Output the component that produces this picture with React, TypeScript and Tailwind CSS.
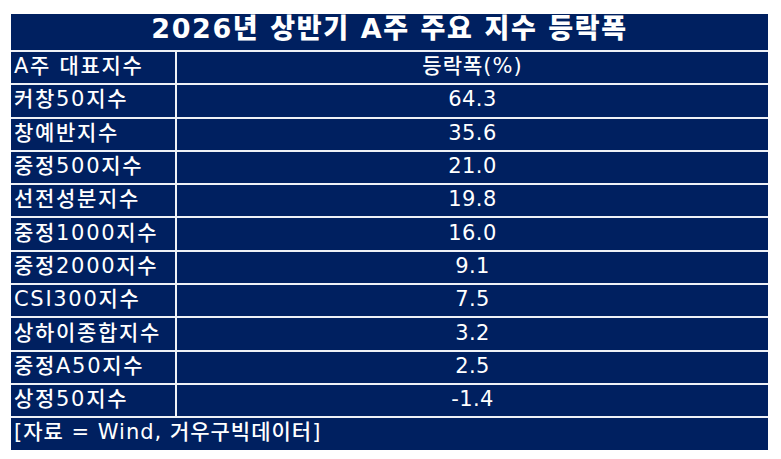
import React from "react";

const rows: [string, string][] = [
  ["커창50지수", "64.3"],
  ["창예반지수", "35.6"],
  ["중정500지수", "21.0"],
  ["선전성분지수", "19.8"],
  ["중정1000지수", "16.0"],
  ["중정2000지수", "9.1"],
  ["CSI300지수", "7.5"],
  ["상하이종합지수", "3.2"],
  ["중정A50지수", "2.5"],
  ["상정50지수", "-1.4"],
];

function Row({ name, val }: { name: string; val: string }) {
  return (
    <div className="h-[33.3px] border-t-2 border-[#eef1f6] grid grid-cols-[166px_1fr] text-[21px] font-medium leading-none">
      <div className="flex items-center pl-[3px] pb-[2px] border-r-2 border-[#eef1f6] tracking-[1.7px] whitespace-nowrap">{name}</div>
      <div className="flex items-center justify-center pb-[2px] tracking-[0.4px]">{val}</div>
    </div>
  );
}

export default function App() {
  return (
    <div
      className="min-h-screen bg-white pt-[14px] pl-[11px]"
      style={{ fontFamily: '"DejaVu Sans", "Noto Sans CJK KR", sans-serif' }}
    >
      <div className="w-[757px] bg-[#002060] text-white">
        <div className="h-[36px] flex items-center justify-center pb-[7px] text-[27px] font-black leading-none tracking-[1.6px] whitespace-nowrap">
          2026년 상반기 A주 주요 지수 등락폭
        </div>
        <div className="h-[33.3px] border-t-2 border-[#eef1f6] grid grid-cols-[166px_1fr] text-[21px] font-medium leading-none">
          <div className="flex items-center pl-[3px] pb-[2px] border-r-2 border-[#eef1f6] tracking-[1.7px] whitespace-nowrap">A주 대표지수</div>
          <div className="flex items-center justify-center pb-[2px] tracking-[1px]">등락폭(%)</div>
        </div>
        {rows.map(([name, val]) => (
          <Row key={name} name={name} val={val} />
        ))}
        <div className="h-[33.3px] border-t-2 border-[#eef1f6] flex items-center pl-[3px] pb-[2px] text-[21px] font-medium leading-none tracking-[1px] whitespace-nowrap">
          [자료 = Wind, 거우구빅데이터]
        </div>
      </div>
    </div>
  );
}
